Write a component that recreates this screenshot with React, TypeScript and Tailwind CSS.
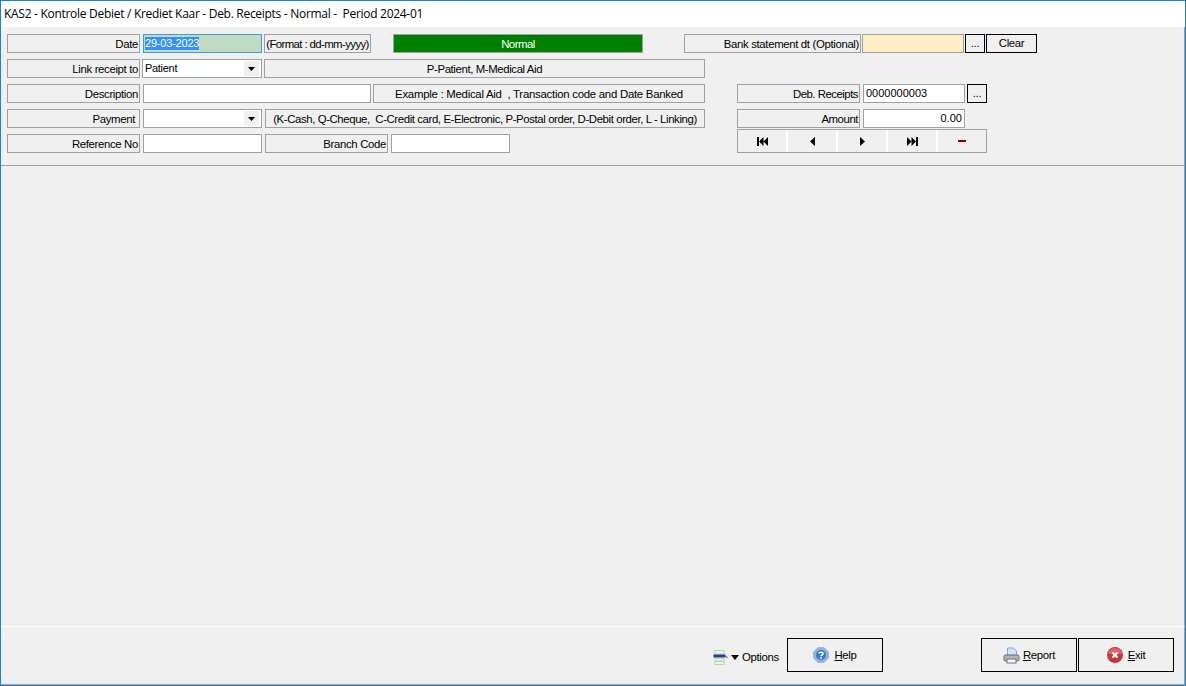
import type { ReactNode } from 'react';

const cell = 'h-[19px] shrink-0 border border-[#a0a0a0] bg-[#f0f0f0] flex items-center leading-none whitespace-pre pt-[2px]';
const field = 'h-[19px] shrink-0 border border-[#a0a0a0] bg-white flex items-center leading-none whitespace-pre px-[2px] text-[11px] tracking-normal';

function Label({ className, children, center }: { className: string; children: ReactNode; center?: boolean }) {
  return <div className={`${cell} ${center ? 'justify-center' : 'justify-end pr-[1px]'} ${className}`}>{children}</div>;
}

function Caret() {
  return (
    <span className="ml-auto flex h-[15px] w-[15px] items-center justify-center bg-[#f0f0f0]">
      <svg width="7" height="4" viewBox="0 0 7 4"><path d="M0 0h7L3.500 4z" fill="#000" /></svg>
    </span>
  );
}

function BlackButton({ className, children }: { className: string; children: ReactNode }) {
  return (
    <button className={`flex shrink-0 items-center justify-center border border-black bg-[#f0f0f0] leading-none ${className}`}>
      {children}
    </button>
  );
}

function NavCell({ children, last }: { children: ReactNode; last?: boolean }) {
  return (
    <div className={`flex flex-1 items-center justify-center bg-[#f0f0f0] ${last ? '' : 'border-r-2 border-white'}`}>
      {children}
    </div>
  );
}

function HelpIcon() {
  return (
    <svg width="16" height="16" viewBox="0 0 16 16">
      <path d="M5 .5h6L15.500 5v6L11 15.500H5L.5 11V5z" fill="#8fb4e0" stroke="#9fb4cf" />
      <circle cx="8" cy="8" r="5" fill="#3a78c4" />
      <path d="M6 6.500C6 5 10 4.800 10 6.800 10 8 8 8 8 9.300" fill="none" stroke="#fff" strokeWidth="1.500" />
      <rect x="7.200" y="10.300" width="1.600" height="1.600" fill="#fff" />
    </svg>
  );
}

function PrinterIcon() {
  return (
    <svg width="17" height="17" viewBox="0 0 17 17">
      <path d="M4.500 1h6l3 3v5h-9z" fill="#cfe2f8" stroke="#7fa8d8" />
      <rect x="1" y="8" width="15" height="6" rx="1.500" fill="#aeb4ba" stroke="#5f6b76" />
      <rect x="4" y="12" width="9" height="4" fill="#f4f6f8" stroke="#6b7680" />
    </svg>
  );
}

function ExitIcon() {
  return (
    <svg width="16" height="16" viewBox="0 0 16 16">
      <circle cx="8" cy="8" r="8" fill="#c4383c" />
      <path d="M1 7a7 6 0 0 1 14 0z" fill="#d9676a" />
      <path d="M5.500 5.500l5 5M10.500 5.500l-5 5" stroke="#fff" strokeWidth="2.200" />
    </svg>
  );
}

function OptionsIcon() {
  return (
    <svg width="15" height="15" viewBox="0 0 15 15">
      <rect x="2" y="0.500" width="9" height="3.500" fill="#eef5e8" stroke="#b9d3ad" />
      <rect x="0.500" y="4.500" width="12" height="3" fill="#1f3f9c" />
      <path d="M13 6l1.500 2" stroke="#44506a" />
      <rect x="2" y="8.500" width="9" height="2.500" fill="#eef5e8" stroke="#b9d3ad" />
      <rect x="2" y="11.500" width="9" height="3" fill="#eef5e8" stroke="#b9d3ad" />
    </svg>
  );
}

export default function App() {
  return (
    <div className="flex h-[686px] w-[1186px] flex-col overflow-hidden border border-[#1883d7] bg-[#f0f0f0] text-[11.4px] tracking-[-0.35px] text-black [font-family:'Liberation_Sans',Arial,sans-serif]">
      {/* Title bar */}
      <div className="flex h-[26px] shrink-0 items-center bg-white pl-[3px] text-[12px] tracking-[-0.29px] [font-family:'Open_Sans',sans-serif]">
        <span className="whitespace-pre">KAS2 - Kontrole Debiet / Krediet Kaar - Deb. Receipts - Normal -  Period 2024-01</span>
      </div>

      {/* Form panel */}
      <div className="flex h-[139px] shrink-0 flex-col gap-[6px] border-b border-r border-[#a0a0a0] pl-[6px] pt-[7px]">
        <div className="flex">
          <Label className="w-[133px]">Date</Label>
          <div className="ml-[3px] flex h-[19px] w-[119px] shrink-0 items-center border border-[#3f9be0] bg-[#bfdcc0] pl-[1px]">
            <span className="bg-[#3390ff] text-[11px] leading-[13px] tracking-[-0.2px] text-white">29-03-2023</span>
          </div>
          <Label center className="ml-[2px] w-[107px] tracking-[-0.6px]">(Format : dd-mm-yyyy)</Label>
          <div className={`${cell} ml-[22px] w-[250px] justify-center !bg-[#008000] tracking-[-0.5px] text-white`}>Normal</div>
          <Label className="ml-[41px] w-[177px]">Bank statement dt (Optional)</Label>
          <div className="ml-[1px] h-[19px] w-[102px] shrink-0 border border-[#a0a0a0] bg-[#ffedc4]" />
          <BlackButton className="ml-[1px] h-[19px] w-[20px]">...</BlackButton>
          <BlackButton className="ml-[1px] h-[19px] w-[51px]">Clear</BlackButton>
        </div>

        <div className="flex">
          <Label className="w-[133px]">Link receipt to</Label>
          <div className={`${field} ml-[2px] w-[120px] !tracking-[-0.3px]`}>
            Patient
            <Caret />
          </div>
          <Label center className="ml-[2px] w-[441px] tracking-[-0.39px]">P-Patient, M-Medical Aid</Label>
        </div>

        <div className="flex">
          <Label className="w-[133px]">Description</Label>
          <div className={`${field} ml-[3px] w-[228px]`} />
          <Label center className="ml-[2px] w-[332px] tracking-[-0.26px]">Example : Medical Aid  , Transaction code and Date Banked</Label>
          <Label className="ml-[32px] w-[123px] tracking-[-0.5px]">Deb. Receipts</Label>
          <div className={`${field} ml-[3px] w-[102px]`}>0000000003</div>
          <BlackButton className="ml-[2px] h-[19px] w-[20px]">...</BlackButton>
        </div>

        <div className="flex">
          <Label className="w-[133px] !pr-[4px]">Payment</Label>
          <div className={`${field} ml-[3px] w-[119px]`}>
            <Caret />
          </div>
          <Label center className="ml-[3px] w-[440px] tracking-[-0.4px]">(K-Cash, Q-Cheque,  C-Credit card, E-Electronic, P-Postal order, D-Debit order, L - Linking)</Label>
          <Label className="ml-[32px] w-[123px] tracking-[-0.45px]">Amount</Label>
          <div className={`${field} ml-[3px] w-[102px] justify-end`}>0.00</div>
        </div>

        <div className="flex">
          <Label className="w-[133px]">Reference No</Label>
          <div className={`${field} ml-[3px] w-[119px]`} />
          <Label className="ml-[3px] w-[123px]">Branch Code</Label>
          <div className={`${field} ml-[3px] w-[119px]`} />
          <div className="ml-[227px] -mt-[5px] flex h-[24px] w-[250px] shrink-0 border border-[#a0a0a0] bg-[#f0f0f0]">
            <NavCell>
              <svg width="11" height="9" viewBox="0 0 11 9"><path d="M0 0h2v9H0zM2 4.500L6.500 0v9zM6.500 4.500L11 0v9z" /></svg>
            </NavCell>
            <NavCell>
              <svg width="5" height="9" viewBox="0 0 5 9"><path d="M5 0v9L0 4.500z" /></svg>
            </NavCell>
            <NavCell>
              <svg width="5" height="9" viewBox="0 0 5 9"><path d="M0 0v9l5-4.500z" /></svg>
            </NavCell>
            <NavCell>
              <svg width="11" height="9" viewBox="0 0 11 9"><path d="M9 0h2v9H9zM9 4.500L4.500 0v9zM4.500 4.500L0 0v9z" /></svg>
            </NavCell>
            <NavCell last>
              <span className="block h-[2px] w-[8px] bg-[#800000]" />
            </NavCell>
          </div>
        </div>
      </div>

      {/* Empty content */}
      <div className="flex-1 border-r border-[#a0a0a0]" />

      {/* Footer */}
      <div className="flex h-[58px] shrink-0 items-start border-r border-t border-white border-r-[#a0a0a0] pt-[11px]">
        <div className="ml-[712px] mt-[10px] flex w-[66px] items-center">
          <OptionsIcon />
          <svg className="ml-[3px]" width="8" height="5" viewBox="0 0 8 5"><path d="M0 0h8L4 5z" /></svg>
          <span className="ml-[3px] mt-[1px]">Options</span>
        </div>
        <BlackButton className="ml-[8px] h-[34px] w-[96px] gap-[5px]">
          <HelpIcon />
          <span className="mt-[1px]"><u>H</u>elp</span>
        </BlackButton>
        <BlackButton className="ml-[98px] h-[34px] w-[96px] gap-[3px]">
          <PrinterIcon />
          <span className="mt-[1px]"><u>R</u>eport</span>
        </BlackButton>
        <BlackButton className="ml-[1px] h-[34px] w-[96px] gap-[5px]">
          <ExitIcon />
          <span className="mt-[1px]"><u>E</u>xit</span>
        </BlackButton>
      </div>
      <div className="h-[1px] shrink-0 bg-[#a0a0a0]" />
    </div>
  );
}
